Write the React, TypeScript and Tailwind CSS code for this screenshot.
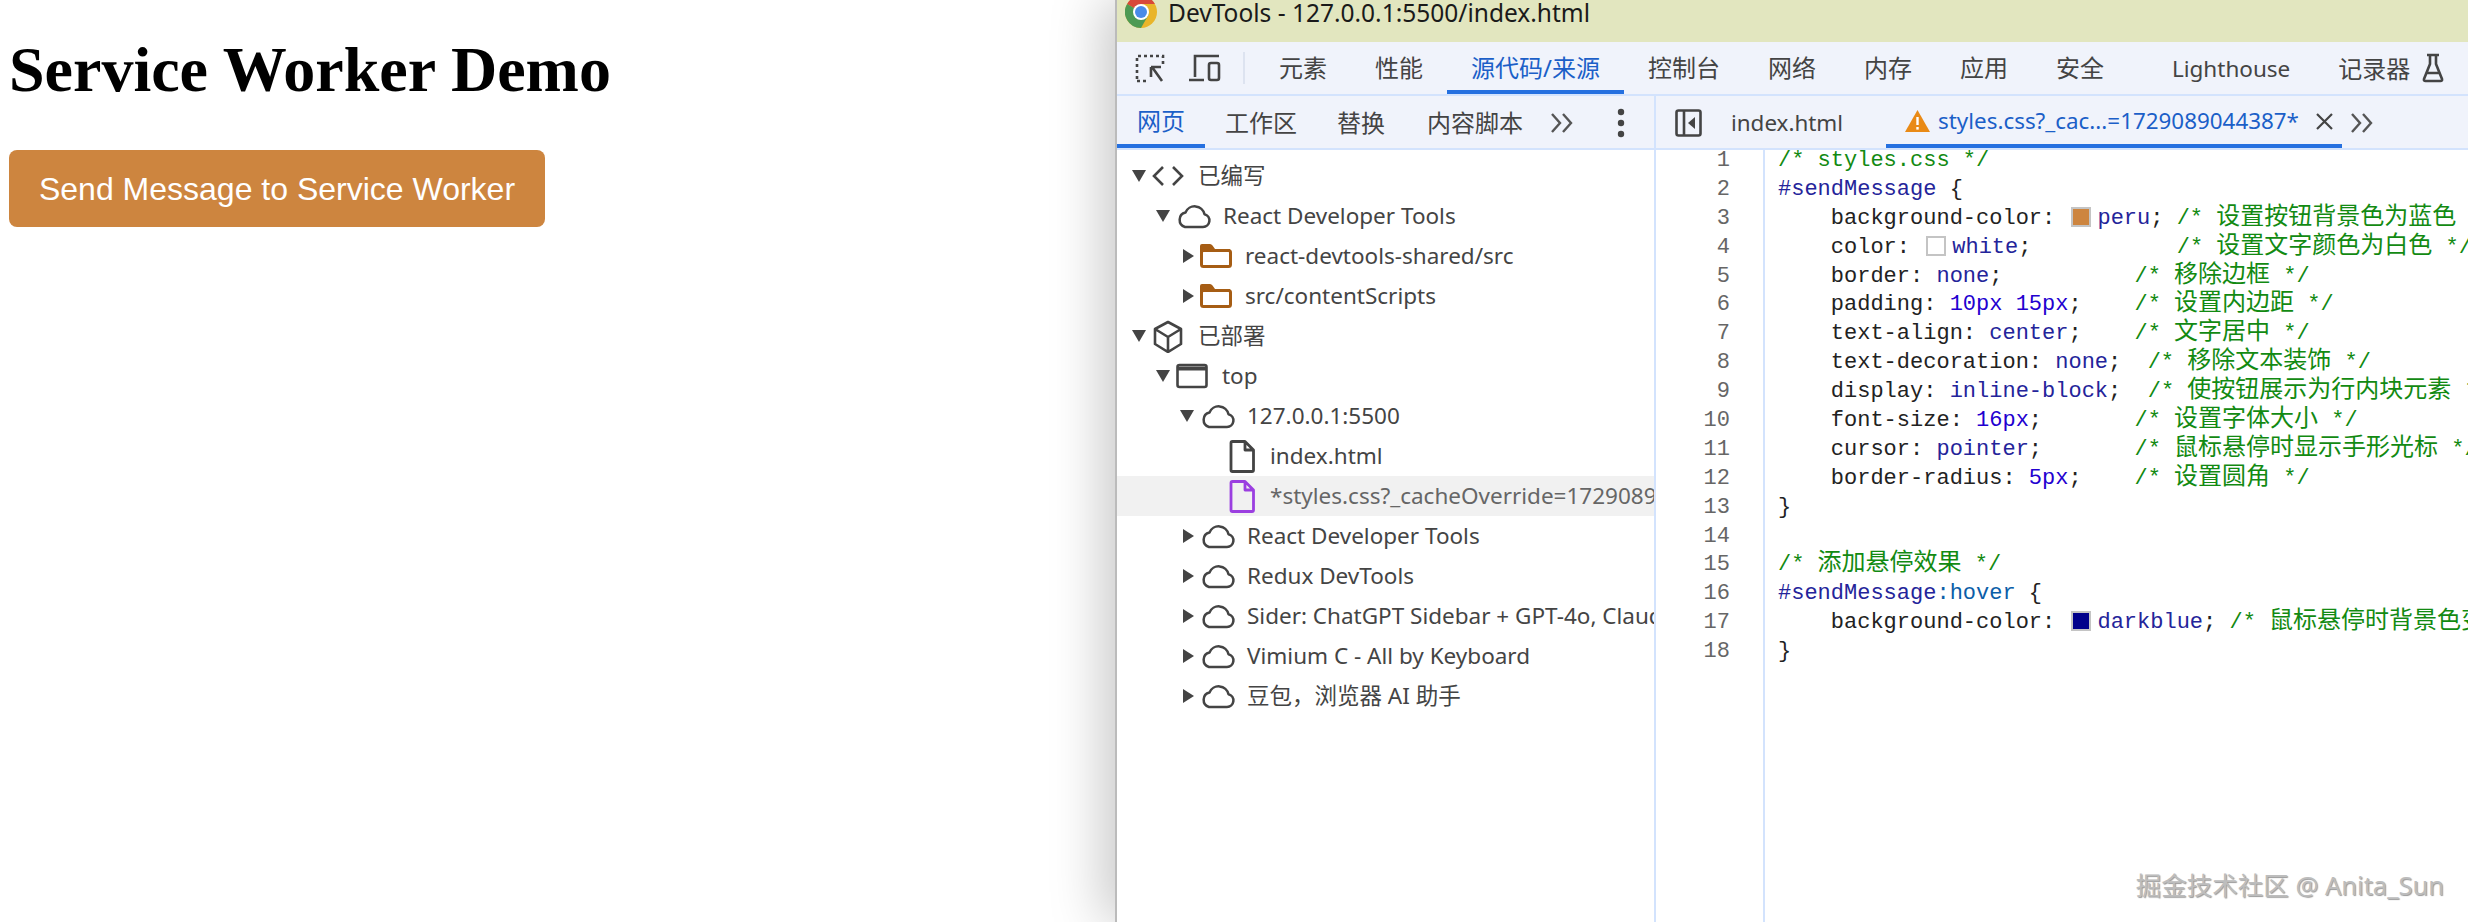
import type { ReactNode } from "react";

const Down = () => (
  <svg width="14" height="12" viewBox="0 0 14 12" className="shrink-0">
    <polygon points="0,0 14,0 7,12" fill="#444" />
  </svg>
);

const Right = () => (
  <svg width="11" height="14" viewBox="0 0 11 14" className="shrink-0">
    <polygon points="0,0 11,7 0,14" fill="#444" />
  </svg>
);

const CloudIcon = () => (
  <svg width="36" height="26" viewBox="0 0 34 26" fill="none" stroke="#444" strokeWidth="2.500" className="shrink-0">
    <path d="M8 24h18a6.500 6.500 0 0 0 1.500-12.800A10 10 0 0 0 8.500 9.500 7.500 7.500 0 0 0 8 24Z" strokeLinejoin="round" />
  </svg>
);

const FolderIcon = () => (
  <svg width="32" height="24" viewBox="0 0 32 24" className="shrink-0 mr-[2px]">
    <rect x="1.500" y="6.500" width="29" height="16" rx="2" fill="none" stroke="#a65d14" strokeWidth="3" />
    <path d="M0 8V2q0-2 2-2h8q1.500 0 2.500 1.500L15 5h15v3Z" fill="#a65d14" />
  </svg>
);

const CodeIcon = () => (
  <svg width="32" height="24" viewBox="0 0 32 24" fill="none" stroke="#444" strokeWidth="2.600" className="shrink-0 mr-[3px]">
    <path d="M11 3 2 12l9 9M21 3l9 9-9 9" />
  </svg>
);

const BoxIcon = () => (
  <svg width="32" height="33" viewBox="0 0 32 33" fill="none" stroke="#444" strokeWidth="2.600" className="shrink-0 mr-[3px]">
    <path d="M16 2 29 9v15l-13 8-13-8V9Z M3 9l13 8 13-8 M16 17v15" strokeLinejoin="round" />
  </svg>
);

const FrameIcon = () => (
  <svg width="32" height="26" viewBox="0 0 32 26" fill="none" stroke="#444" strokeWidth="2.600" className="shrink-0 mr-[3px]">
    <rect x="1.500" y="2" width="29" height="22" rx="2" />
    <path d="M1.500 5.500h29" strokeWidth="4" />
  </svg>
);

const FileIcon = ({ color }: { color: string }) => (
  <svg width="26" height="33" viewBox="0 0 26 33" fill="none" stroke={color} strokeWidth="2.800" className="shrink-0 mr-[4px]">
    <path d="M2 3q0-1.500 1.500-1.500H16L24.500 10v20q0 1.500-1.500 1.500H3.500Q2 31.500 2 30Z M16 1.500V10h8.500" strokeLinejoin="round" />
  </svg>
);

const ChromeIcon = () => (
  <svg width="32" height="32" viewBox="0 0 32 32" className="shrink-0 -mt-[4px]">
    <circle cx="16" cy="16" r="16" fill="#e9b52a" />
    <path d="M16 16 2.100 8A16 16 0 0 1 29.900 8H16Z" fill="#d8483a" />
    <path d="M16 16 2.100 8A16 16 0 0 0 16 32l8-14Z" fill="#4d9a54" />
    <circle cx="16" cy="16" r="8" fill="#fff" />
    <circle cx="16" cy="16" r="6" fill="#4a8be8" />
  </svg>
);

const InspectIcon = () => (
  <svg width="30" height="30" viewBox="0 0 30 30" fill="none" stroke="#444" strokeWidth="2.600" className="shrink-0">
    <path d="M2 26V3h26v10" strokeDasharray="3 3" />
    <path d="M2 28h10" strokeDasharray="3 3" />
    <path d="M17 14l10 14M16 14v10M16 14h10" />
  </svg>
);

const DeviceIcon = () => (
  <svg width="32" height="30" viewBox="0 0 32 30" fill="none" stroke="#444" strokeWidth="2.600" className="shrink-0">
    <path d="M6 24V3h24M0 27h15" />
    <rect x="20" y="10" width="10" height="17" rx="2" />
  </svg>
);

const FlaskIcon = () => (
  <svg width="22" height="30" viewBox="0 0 22 30" fill="none" stroke="#444" strokeWidth="2.600" className="shrink-0">
    <path d="M5 2h12M8 2v9L2 26q-.5 2 1.500 2h15q2 0 1.500-2L14 11V2M5 20h12" strokeLinejoin="round" />
  </svg>
);

const More = () => (
  <svg width="24" height="20" viewBox="0 0 24 20" fill="none" stroke="#555" strokeWidth="2.400" className="shrink-0">
    <path d="M2 1l8 9-8 9M13 1l8 9-8 9" />
  </svg>
);

const Dots = () => (
  <svg width="8" height="30" viewBox="0 0 8 30" fill="#444" className="shrink-0">
    <circle cx="4" cy="4" r="3.200" />
    <circle cx="4" cy="15" r="3.200" />
    <circle cx="4" cy="26" r="3.200" />
  </svg>
);

const SidebarIcon = () => (
  <svg width="27" height="28" viewBox="0 0 27 28" fill="none" stroke="#444" strokeWidth="2.600" className="shrink-0">
    <rect x="1.500" y="1.500" width="24" height="25" rx="2" />
    <path d="M9 1.500v25" />
    <polygon points="20,8 20,20 13,14" fill="#444" stroke="none" />
  </svg>
);

const WarnIcon = () => (
  <svg width="25" height="24" viewBox="0 0 25 24" className="shrink-0">
    <polygon points="12.500,1 25,23 0,23" fill="#e98a16" />
    <rect x="11.300" y="8" width="2.400" height="8" fill="#fff" />
    <rect x="11.300" y="18" width="2.400" height="2.600" fill="#fff" />
  </svg>
);

const CloseIcon = () => (
  <svg width="17" height="17" viewBox="0 0 17 17" fill="none" stroke="#444" strokeWidth="2.200" className="shrink-0">
    <path d="M1 1l15 15M16 1 1 16" />
  </svg>
);

const topTabs = [
  { label: "元素" },
  { label: "性能" },
  { label: "源代码/来源", active: true },
  { label: "控制台" },
  { label: "网络" },
  { label: "内存" },
  { label: "应用" },
  { label: "安全" },
];

const treeRows: { indent: string; arrow?: ReactNode; icon: ReactNode; label: string; selected?: boolean }[] = [
  { indent: "pl-[15px]", arrow: <Down />, icon: <CodeIcon />, label: "已编写" },
  { indent: "pl-[39px]", arrow: <Down />, icon: <CloudIcon />, label: "React Developer Tools" },
  { indent: "pl-[66px]", arrow: <Right />, icon: <FolderIcon />, label: "react-devtools-shared/src" },
  { indent: "pl-[66px]", arrow: <Right />, icon: <FolderIcon />, label: "src/contentScripts" },
  { indent: "pl-[15px]", arrow: <Down />, icon: <BoxIcon />, label: "已部署" },
  { indent: "pl-[39px]", arrow: <Down />, icon: <FrameIcon />, label: "top" },
  { indent: "pl-[63px]", arrow: <Down />, icon: <CloudIcon />, label: "127.0.0.1:5500" },
  { indent: "pl-[106px]", icon: <FileIcon color="#444" />, label: "index.html" },
  { indent: "pl-[106px]", icon: <FileIcon color="#9b3fe0" />, label: "*styles.css?_cacheOverride=1729089044387", selected: true },
  { indent: "pl-[66px]", arrow: <Right />, icon: <CloudIcon />, label: "React Developer Tools" },
  { indent: "pl-[66px]", arrow: <Right />, icon: <CloudIcon />, label: "Redux DevTools" },
  { indent: "pl-[66px]", arrow: <Right />, icon: <CloudIcon />, label: "Sider: ChatGPT Sidebar + GPT-4o, Claude" },
  { indent: "pl-[66px]", arrow: <Right />, icon: <CloudIcon />, label: "Vimium C - All by Keyboard" },
  { indent: "pl-[66px]", arrow: <Right />, icon: <CloudIcon />, label: "豆包，浏览器 AI 助手" },
];

const Cm = ({ text }: { text: string }) => (
  <span className="text-[#128a12]">
    /*{" "}
    <span className="text-[24px] leading-[0] font-['Noto_Sans_CJK_SC',sans-serif]">{text}</span>
    {" "}*/
  </span>
);
const Val = ({ children }: { children: ReactNode }) => <span className="text-[#24249a]">{children}</span>;
const Num = ({ children }: { children: ReactNode }) => <span className="text-[#2200d0]">{children}</span>;
const Swatch = ({ color }: { color: string }) => (
  <span className={`inline-block w-[20px] h-[20px] ml-[3px] mr-[6px] align-[-3px] border-2 border-[#c4c4c4] ${color}`} />
);

const codeLines: ReactNode[] = [
  <span className="text-[#128a12]">/* styles.css */</span>,
  <><Val>#sendMessage</Val> {"{"}</>,
  <>    background-color: <Swatch color="bg-[#cd853f]" /><Val>peru</Val>; <Cm text="设置按钮背景色为蓝色" /></>,
  <>    color: <Swatch color="bg-white" /><Val>white</Val>;           <Cm text="设置文字颜色为白色" /></>,
  <>    border: <Val>none</Val>;          <Cm text="移除边框" /></>,
  <>    padding: <Num>10px 15px</Num>;    <Cm text="设置内边距" /></>,
  <>    text-align: <Val>center</Val>;    <Cm text="文字居中" /></>,
  <>    text-decoration: <Val>none</Val>;  <Cm text="移除文本装饰" /></>,
  <>    display: <Val>inline-block</Val>;  <Cm text="使按钮展示为行内块元素" /></>,
  <>    font-size: <Num>16px</Num>;       <Cm text="设置字体大小" /></>,
  <>    cursor: <Val>pointer</Val>;       <Cm text="鼠标悬停时显示手形光标" /></>,
  <>    border-radius: <Num>5px</Num>;    <Cm text="设置圆角" /></>,
  <>{"}"}</>,
  <> </>,
  <Cm text="添加悬停效果" />,
  <><Val>#sendMessage</Val><span className="text-[#0b5ea8]">:hover</span> {"{"}</>,
  <>    background-color: <Swatch color="bg-[#00008b]" /><Val>darkblue</Val>; <Cm text="鼠标悬停时背景色变深" /></>,
  <>{"}"}</>,
];

export default function App() {
  return (
    <div className="relative flex w-[2468px] h-[922px] overflow-hidden bg-white">
      {/* Page */}
      <div className="w-[1115px] shrink-0 pl-[9px] pt-[33px]">
        <h1 className="font-['Liberation_Serif',serif] font-bold text-[64px] leading-[74px] text-black">
          Service Worker Demo
        </h1>
        <button className="mt-[43px] h-[77px] w-[536px] rounded-[8px] bg-[#cd853f] text-white text-[32px] font-['Liberation_Sans',sans-serif]">
          Send Message to Service Worker
        </button>
      </div>

      {/* DevTools window */}
      <div className="relative flex-1 min-w-0 flex flex-col border-l-2 border-[#bbb] bg-white shadow-[-12px_0_50px_rgba(0,0,0,0.22)] font-['Noto_Sans','Noto_Sans_CJK_SC',sans-serif] overflow-hidden">
        <div className="h-[42px] shrink-0 bg-[#e2e6bf] flex items-start pl-[8px] gap-[11px] overflow-hidden">
          <ChromeIcon />
          <span className="text-[24.500px] leading-[26px] text-[#1a1a1a] whitespace-nowrap">DevTools - 127.0.0.1:5500/index.html</span>
        </div>

        {/* Panel tabs */}
        <div className="h-[54px] shrink-0 bg-[#f0f3fb] flex items-stretch border-b-2 border-[#d3e3fd] pl-[18px]">
          <div className="flex items-center gap-[24px] pr-[22px]">
            <InspectIcon />
            <DeviceIcon />
          </div>
          <div className="my-[10px] w-[2px] bg-[#dde3f0]" />
          <div className="flex items-stretch ml-[10px]">
            {topTabs.map((t) => (
              <div
                key={t.label}
                className={`px-[24px] pt-[4px] flex items-center text-[24px] leading-none border-b-[4px] ${
                  t.active ? "text-[#1b5fc8] border-[#2570e0]" : "text-[#444] border-transparent"
                }`}
              >
                {t.label}
              </div>
            ))}
            <div className="ml-[44px] pt-[2px] flex items-center text-[22.500px] text-[#444]">Lighthouse</div>
            <div className="ml-[48px] pt-[2px] flex items-center text-[24px] text-[#444]">记录器</div>
            <div className="ml-[12px] flex items-center">
              <FlaskIcon />
            </div>
          </div>
        </div>

        {/* Navigator + editor */}
        <div className="flex flex-1 min-h-0">
          <div className="w-[537px] shrink-0 flex flex-col">
            <div className="h-[54px] shrink-0 pt-[2px] bg-[#f0f3fb] border-b-2 border-[#d3e3fd] flex items-stretch text-[24px] text-[#444]">
              <div className="w-[88px] flex items-center justify-center text-[#1b5fc8] border-b-[4px] border-[#2570e0]">网页</div>
              <div className="ml-[20px] flex items-center">工作区</div>
              <div className="ml-[40px] flex items-center">替换</div>
              <div className="ml-[42px] flex items-center">内容脚本</div>
              <div className="ml-[27px] flex items-center"><More /></div>
              <div className="ml-[43px] flex items-center"><Dots /></div>
            </div>
            <div className="pt-[6px] overflow-hidden">
              {treeRows.map((r, i) => (
                <div
                  key={i}
                  className={`h-[40px] flex items-center whitespace-nowrap overflow-hidden text-[22.500px] ${r.indent} ${
                    r.selected ? "bg-[#f1f1f1] text-[#666]" : "text-[#444]"
                  }`}
                >
                  {r.arrow}
                  <span className="ml-[6px] mr-[11px] flex items-center">{r.icon}</span>
                  {r.label}
                </div>
              ))}
            </div>
          </div>

          <div className="flex-1 min-w-0 flex flex-col border-l-2 border-[#d3e3fd]">
            <div className="h-[54px] shrink-0 pt-[2px] bg-[#f0f3fb] border-b-2 border-[#d3e3fd] flex items-stretch pl-[19px] text-[22.400px]">
              <div className="flex items-center"><SidebarIcon /></div>
              <div className="ml-[29px] flex items-center text-[#444]">index.html</div>
              <div className="ml-[43px] w-[456px] shrink-0 pl-[19px] flex items-center border-b-[4px] border-[#2570e0] text-[#1b5fc8]">
                <WarnIcon />
                <span className="ml-[8px] whitespace-nowrap">styles.css?_cac...=1729089044387*</span>
                <span className="ml-[17px] flex items-center"><CloseIcon /></span>
              </div>
              <div className="ml-[8px] flex items-center"><More /></div>
            </div>
            <div className="flex flex-1 min-h-0 overflow-hidden font-['Liberation_Mono',monospace] text-[22px] leading-[28.9px]">
              <div className="w-[109px] shrink-0 border-r-2 border-[#d3e3fd] pr-[33px] text-right text-[#666]">
                <div className="-mt-[3px]">
                  {codeLines.map((_, i) => (
                    <div key={i} className="h-[28.9px]">{i + 1}</div>
                  ))}
                </div>
              </div>
              <div className="flex-1 min-w-0 -mt-[3px] pl-[13px] text-[#222]">
                {codeLines.map((line, i) => (
                  <div key={i} className="h-[28.9px] whitespace-pre">{line}</div>
                ))}
              </div>
            </div>
          </div>
        </div>
      </div>

      <div className="absolute right-[24px] bottom-[22px] text-[25.500px] leading-[30px] text-[#bdbdbd] font-['Noto_Sans','Noto_Sans_CJK_SC',sans-serif] [text-shadow:1px_1px_1px_rgba(0,0,0,0.4)]">
        掘金技术社区 @ Anita_Sun
      </div>
    </div>
  );
}
